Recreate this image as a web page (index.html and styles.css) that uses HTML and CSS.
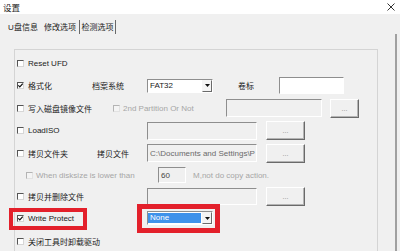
FILE: index.html
```html
<!DOCTYPE html>
<html lang="zh-CN">
<head>
    <meta charset="UTF-8">
    <meta name="viewport" content="width=device-width, initial-scale=1.0">
    <title>设置</title>
    <link rel="stylesheet" href="styles.css">
</head>
<body>
    <div class="titlebar">
        <span>设置</span>
        <svg class="close" width="8" height="8" viewBox="0 0 8 8"><path d="M0.5 0.5L7.5 7.5M7.5 0.5L0.5 7.5" stroke="#333" stroke-width="1"/></svg>
    </div>

    <div class="tabs">
        <span class="tab w-36">U盘信息</span>
        <span class="tab w-38 edge active">修改选项</span>
        <span class="tab w-35 edge">检测选项</span>
    </div>

    <div class="panel">
        <div class="group">
            <!-- Reset UFD -->
            <div class="row">
                <span class="cb"></span><span>Reset UFD</span>
            </div>

            <!-- 格式化 -->
            <div class="row">
                <span class="cb"><svg width="5" height="5" viewBox="0 0 5 5"><path d="M0.3 2.3L1.8 3.8L4.7 0.6" stroke="#111" stroke-width="1.2" fill="none"/></svg></span>
                <span class="w-64">格式化</span>
                <span class="w-55">档案系统</span>
                <div class="combo">
                    <span class="val">FAT32</span>
                    <span class="arrow"><svg width="5" height="3" viewBox="0 0 5 3"><path d="M0 0H5L2.5 3Z" fill="#111"/></svg></span>
                </div>
                <span class="w-41 ml-25">卷标</span>
                <span class="field white w-65 h-17"></span>
            </div>

            <!-- 写入磁盘镜像文件 -->
            <div class="row">
                <span class="cb"></span>
                <span class="w-85">写入磁盘镜像文件</span>
                <span class="cb off"></span>
                <span class="w-103 muted">2nd Partition Or Not</span>
                <span class="field w-96"></span>
                <span class="btn w-29 ml-8">...</span>
            </div>

            <!-- LoadISO -->
            <div class="row">
                <span class="cb"></span>
                <span class="w-119">LoadISO</span>
                <span class="field w-110"></span>
                <span class="btn w-39 ml-9">...</span>
            </div>

            <!-- 拷贝文件夹 -->
            <div class="row">
                <span class="cb"></span>
                <span class="w-69">拷贝文件夹</span>
                <span class="w-50">拷贝文件</span>
                <span class="field w-110 path">C:\Documents and Settings\P</span>
                <span class="btn w-39 ml-9">...</span>
            </div>

            <!-- disksize -->
            <div class="row">
                <span class="cb off ml-9 mr-6"></span>
                <span class="w-122 muted">When disksize is lower than</span>
                <span class="field w-28 h-16 num">60</span>
                <span class="ml-7 muted">M,not do copy action.</span>
            </div>

            <!-- 拷贝并删除文件 -->
            <div class="row">
                <span class="cb"></span>
                <span class="w-119">拷贝并删除文件</span>
                <span class="field w-110 h-17"></span>
                <span class="btn w-39 ml-9">...</span>
            </div>

            <!-- Write Protect -->
            <div class="row">
                <div class="mark mark-left">
                    <span class="cb"><svg width="5" height="5" viewBox="0 0 5 5"><path d="M0.3 2.3L1.8 3.8L4.7 0.6" stroke="#111" stroke-width="1.2" fill="none"/></svg></span>
                    <span>Write Protect</span>
                </div>
                <div class="mark mark-right">
                    <div class="combo">
                        <span class="val sel">None</span>
                        <span class="arrow"><svg width="5" height="3" viewBox="0 0 5 3"><path d="M0 0H5L2.5 3Z" fill="#111"/></svg></span>
                    </div>
                </div>
            </div>

            <!-- 关闭工具时卸载驱动 -->
            <div class="row">
                <span class="cb"></span><span>关闭工具时卸载驱动</span>
            </div>
        </div>
    </div>
</body>
</html>
```

FILE: styles.css
```css
body {
    margin: 0;
    width: 400px;
    height: 251px;
    overflow: hidden;
    background-color: #f0f0f0;
    font-family: "Liberation Sans", "Noto Sans CJK SC", sans-serif;
    font-size: 8px;
    color: #1a1a1a;
}

/* window title */
.titlebar {
    height: 14px;
    background-color: #fff;
    display: flex;
    align-items: center;
    justify-content: space-between;
    padding: 0 5px 0 3px;
    font-size: 8.5px;
    color: #222;
}

/* tab strip */
.tabs {
    display: flex;
    height: 14px;
    margin: 6px 0 0 5px;
}
.tab {
    text-align: center;
    line-height: 15px;
    white-space: nowrap;
}
.tab.edge {
    border-right: 1px solid #696969;
}

.panel {
    width: 381px;
    height: 217px;
    margin-left: 3px;
    padding-left: 11px;
    border-right: 2px solid #a0a0a0;
    overflow: hidden;
}

.group {
    width: 360px;
    height: 300px;
    margin-top: 15px;
    border: 1px solid #d4d4d4;
    padding: 2px 0 0 2px;
    display: grid;
    grid-template-rows: 22px 23px 22px 23px 22px 22px 21px 23px 22px;
    align-content: start;
}

.row {
    display: flex;
    align-items: center;
    white-space: nowrap;
}

/* checkbox */
.cb {
    width: 7px;
    height: 7px;
    box-sizing: border-box;
    border: 1px solid;
    border-color: #555 #d6d6d6 #d6d6d6 #555;
    background-color: #fff;
    margin-right: 4px;
    flex: none;
    display: flex;
    align-items: center;
    justify-content: center;
}
.cb svg {
    display: block;
}
.cb.off {
    border-color: #b4b4b4 #e2e2e2 #e2e2e2 #b4b4b4;
    background-color: #f4f4f4;
    margin-right: 3px;
}

.muted {
    color: #a6a6a6;
}

/* text box */
.field {
    height: 18px;
    box-sizing: border-box;
    border: 1px solid;
    border-color: #8e8e8e #fff #fff #8e8e8e;
    background-color: #f0f0f0;
    flex: none;
    display: flex;
    align-items: center;
    padding-left: 2px;
    overflow: hidden;
}
.field.white {
    background-color: #fff;
}
.field.path {
    color: #6a6a6a;
}
.field.num {
    color: #444;
}

/* push button */
.btn {
    height: 19px;
    box-sizing: border-box;
    border: 1px solid;
    border-color: #fff #6a6a6a #6a6a6a #fff;
    box-shadow: inset -1px -1px 0 #b4b4b4;
    background-color: #f0f0f0;
    color: #8a8a8a;
    font-size: 7px;
    flex: none;
    display: flex;
    align-items: center;
    justify-content: center;
}

/* combo box */
.combo {
    width: 66px;
    height: 14px;
    box-sizing: border-box;
    border: 1px solid;
    border-color: #8e8e8e #fff #fff #8e8e8e;
    background-color: #fff;
    display: flex;
    flex: none;
}
.combo .val {
    flex: 1;
    padding-left: 2px;
    line-height: 12px;
}
.combo .val.sel {
    background-color: #3f92ea;
    color: #fff;
    margin: 1px 1px 1px 0;
    line-height: 10px;
}
.combo .arrow {
    width: 10px;
    box-sizing: border-box;
    border: 1px solid;
    border-color: #f4f4f4 #6a6a6a #6a6a6a #f4f4f4;
    background-color: #f4f4f4;
    display: flex;
    align-items: center;
    justify-content: center;
}

/* red highlight marks */
.mark {
    display: flex;
    align-items: center;
    outline: 4px solid #e3202b;
}
.mark-left {
    width: 70px;
    height: 14px;
    box-sizing: border-box;
    margin-left: -4px;
    padding-left: 4px;
}
.mark-right {
    width: 73px;
    height: 19px;
    box-sizing: border-box;
    margin-left: 59px;
    padding: 2px 2px 3px 5px;
    outline-width: 5px;
}

/* widths and spacing */
.w-28 { width: 28px; }
.w-29 { width: 29px; }
.w-35 { width: 35px; }
.w-36 { width: 36px; }
.w-38 { width: 38px; }
.w-39 { width: 39px; }
.w-41 { width: 41px; }
.w-50 { width: 50px; }
.w-55 { width: 55px; }
.w-64 { width: 64px; }
.w-65 { width: 65px; }
.w-69 { width: 69px; }
.w-85 { width: 85px; }
.w-96 { width: 96px; }
.w-103 { width: 103px; }
.w-110 { width: 110px; }
.w-119 { width: 119px; }
.w-122 { width: 122px; }
.h-16 { height: 16px; }
.h-17 { height: 17px; }
.ml-7 { margin-left: 7px; }
.ml-8 { margin-left: 8px; }
.ml-9 { margin-left: 9px; }
.ml-25 { margin-left: 25px; }
.mr-6 { margin-right: 6px; }

.row > span:not(.cb):not(.field):not(.btn) {
    flex: none;
}
```
